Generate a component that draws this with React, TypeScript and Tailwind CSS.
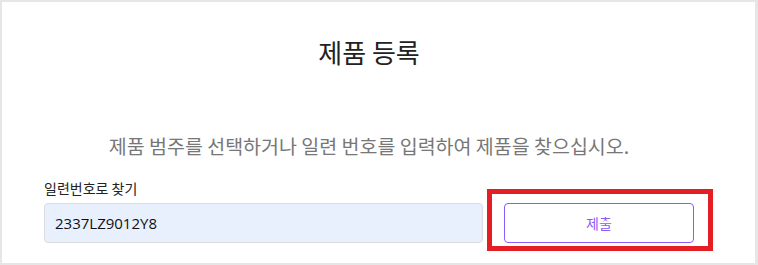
import React, { useState } from "react";

const font = { fontFamily: '"Noto Sans CJK KR", "Noto Sans", sans-serif' };

export default function App() {
  const [serial, setSerial] = useState("2337LZ9012Y8");

  return (
    <div
      className="w-[758px] h-[265px] bg-white border-2 border-r-[3px] border-[#e6e6e6] overflow-hidden"
      style={font}
    >
      <div className="w-[650px] ml-[42px] flex flex-col">
        {/* Title */}
        <h1 className="mt-[34px] h-[32px] text-[26px] leading-[32px] text-center text-[#222222] font-normal">
          제품 등록
        </h1>

        {/* Subtitle */}
        <p className="mt-[64px] h-[28px] text-[19.5px] leading-[28px] text-center text-[#777777] whitespace-nowrap">
          제품 범주를 선택하거나 일련 번호를 입력하여 제품을 찾으십시오.
        </p>

        {/* Serial lookup */}
        <label className="mt-[18px] h-[20px] text-[14px] leading-[20px] text-[#222222]">
          일련번호로 찾기
        </label>
        <div className="mt-[5px] flex items-center gap-[21px]">
          <input
            value={serial}
            onChange={(e) => setSerial(e.target.value)}
            className="w-[439px] h-[40px] px-[10px] rounded-[4px] border border-[#d9dde3] bg-[#e8f0fe] text-[15px] text-[#111111] outline-none"
            style={{ fontFamily: '"Open Sans", "Noto Sans", sans-serif' }}
          />
          <div className="relative">
            <button className="w-[190px] h-[40px] rounded-[4px] border border-[#8b5cf6] bg-white text-[14px] text-[#8b5cf6]">
              제출
            </button>
            {/* annotation highlight */}
            <div className="absolute left-[-17px] top-[-14px] w-[226px] h-[62px] border-[5px] border-[#e31e24] pointer-events-none" />
          </div>
        </div>
      </div>
    </div>
  );
}
